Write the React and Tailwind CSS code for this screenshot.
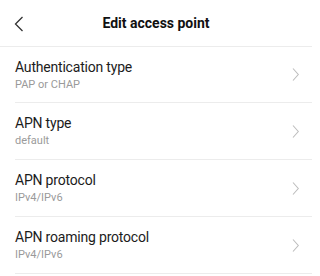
import React from 'react';

const items = [
  { title: 'Authentication type', value: 'PAP or CHAP', h: 'h-[56px]' },
  { title: 'APN type', value: 'default', h: 'h-[57px]' },
  { title: 'APN protocol', value: 'IPv4/IPv6', h: 'h-[57px]' },
  { title: 'APN roaming protocol', value: 'IPv4/IPv6', h: 'h-[57px]' },
];

const Row = ({ title, value, h }) => (
  <div className={`ml-[15px] ${h} flex items-center border-b border-[#ececec] pr-[13px]`}>
    <div className="flex-1 flex flex-col">
      <span className="text-[14px] leading-[16px] tracking-[-0.2px] text-[#1c1c1c]">{title}</span>
      <span className="text-[11px] leading-[12px] mt-[4px] text-[#9a9a9a]">{value}</span>
    </div>
    <svg width="7" height="13" viewBox="0 0 7 13" fill="none" stroke="#bdbdbd" strokeWidth="1.1">
      <path d="M1 0.5l5.3 6-5.3 6" />
    </svg>
  </div>
);

export default function App() {
  return (
    <div className="w-[312px] h-[276px] bg-white overflow-hidden" style={{ fontFamily: 'Roboto, "Noto Sans", sans-serif' }}>
      <header className="h-[47px] relative flex items-center justify-center border-b border-[#ececec]">
        <button className="absolute left-[14px] top-[16px]" aria-label="Back">
          <svg width="10" height="16" viewBox="0 0 10 16" fill="none" stroke="#333" strokeWidth="1.3">
            <path d="M8.5 1L1.5 8l7 7" />
          </svg>
        </button>
        <span className="text-[14px] font-bold text-[#111] pt-[1px]">Edit access point</span>
      </header>
      {items.map((it) => (
        <Row key={it.title} {...it} />
      ))}
    </div>
  );
}
